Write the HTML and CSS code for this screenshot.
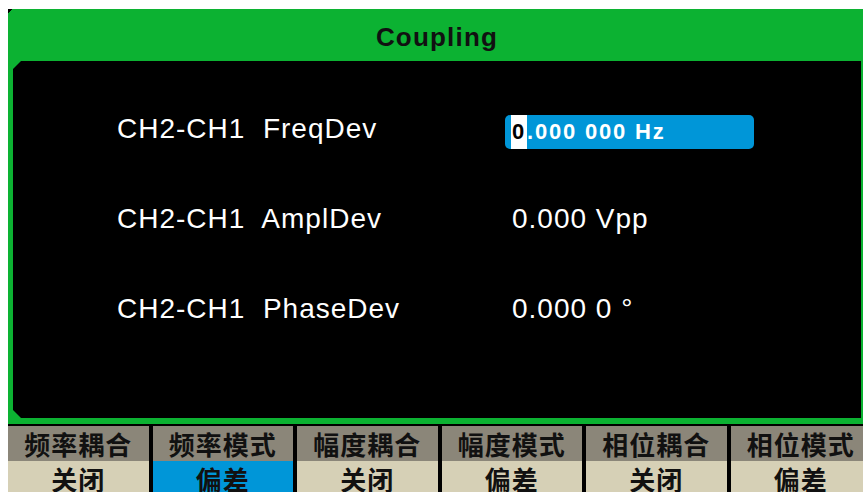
FILE: index.html
```html
<!DOCTYPE html>
<html lang="en">
<head>
    <meta charset="UTF-8">
    <meta name="viewport" content="width=device-width, initial-scale=1.0">
    <title>Coupling</title>
    <link rel="stylesheet" href="styles.css">
</head>
<body>
    <div class="screen">
        <div class="title">Coupling</div>
        <div class="panel">
            <div class="row">
                <span class="label">CH2-CH1  FreqDev</span>
                <span class="field"><span class="cursor">0</span>.000 000 Hz</span>
            </div>
            <div class="row">
                <span class="label">CH2-CH1  AmplDev</span>
                <span class="value">0.000 Vpp</span>
            </div>
            <div class="row">
                <span class="label">CH2-CH1  PhaseDev</span>
                <span class="value">0.000 0 °</span>
            </div>
        </div>
    </div>
    <div class="softkeys">
        <div class="key"><div class="key-name">频率耦合</div><div class="key-value">关闭</div></div>
        <div class="key"><div class="key-name">频率模式</div><div class="key-value active">偏差</div></div>
        <div class="key"><div class="key-name">幅度耦合</div><div class="key-value">关闭</div></div>
        <div class="key"><div class="key-name">幅度模式</div><div class="key-value">偏差</div></div>
        <div class="key"><div class="key-name">相位耦合</div><div class="key-value">关闭</div></div>
        <div class="key"><div class="key-name">相位模式</div><div class="key-value">偏差</div></div>
    </div>
</body>
</html>
```

FILE: styles.css
```css
body {
    margin: 0;
    height: 492px;
    overflow: hidden;
    background-color: #fff;
    font-family: "Liberation Sans", Arial, sans-serif;
}
.screen {
    margin: 9px 0 0 8px;
    padding: 0 2px 6px 5px;
    background: linear-gradient(135deg, #000 3px, transparent 3px), #0cb232;
}
.title {
    height: 52px;
    box-sizing: border-box;
    padding-top: 5px;
    display: flex;
    align-items: center;
    justify-content: center;
    font-size: 26px;
    font-weight: bold;
    letter-spacing: 1.2px;
    color: #111;
}
.panel {
    height: 357px;
    box-sizing: border-box;
    padding: 23px 0 0 104px;
    background-color: #000;
    clip-path: polygon(8px 0, 100% 0, 100% 100%, 8px 100%, 0 calc(100% - 8px), 0 8px);
}
.row {
    height: 90px;
    display: grid;
    grid-template-columns: 388px 1fr;
    align-items: center;
    color: #fff;
    font-size: 28px;
    letter-spacing: 1px;
}
.label {
    white-space: pre;
}
.value {
    padding-left: 7px;
}
.field {
    width: 249px;
    height: 34px;
    margin-top: 5px;
    box-sizing: border-box;
    padding-left: 6px;
    display: flex;
    align-items: center;
    border-radius: 5px;
    background-color: #0096d8;
    font-size: 22px;
    font-weight: bold;
    letter-spacing: 1.8px;
    white-space: pre;
}
.cursor {
    align-self: stretch;
    display: flex;
    align-items: center;
    padding: 0 1px;
    background-color: #fff;
    color: #000;
}
.softkeys {
    margin-left: 8px;
    padding-top: 2px;
    display: grid;
    grid-template-columns: repeat(6, 140.5px);
    column-gap: 4px;
    background-color: #000;
}
.key-name, .key-value {
    height: 35px;
    line-height: 35px;
    text-align: center;
    font-family: "Noto Sans CJK SC", sans-serif;
    font-size: 26px;
    font-weight: bold;
    letter-spacing: 1px;
    color: #111;
    overflow: hidden;
}
.key-name {
    background-color: #8b8679;
}
.key-value {
    background-color: #d6d0b6;
}
.key-value.active {
    background-color: #0096d8;
}
```
